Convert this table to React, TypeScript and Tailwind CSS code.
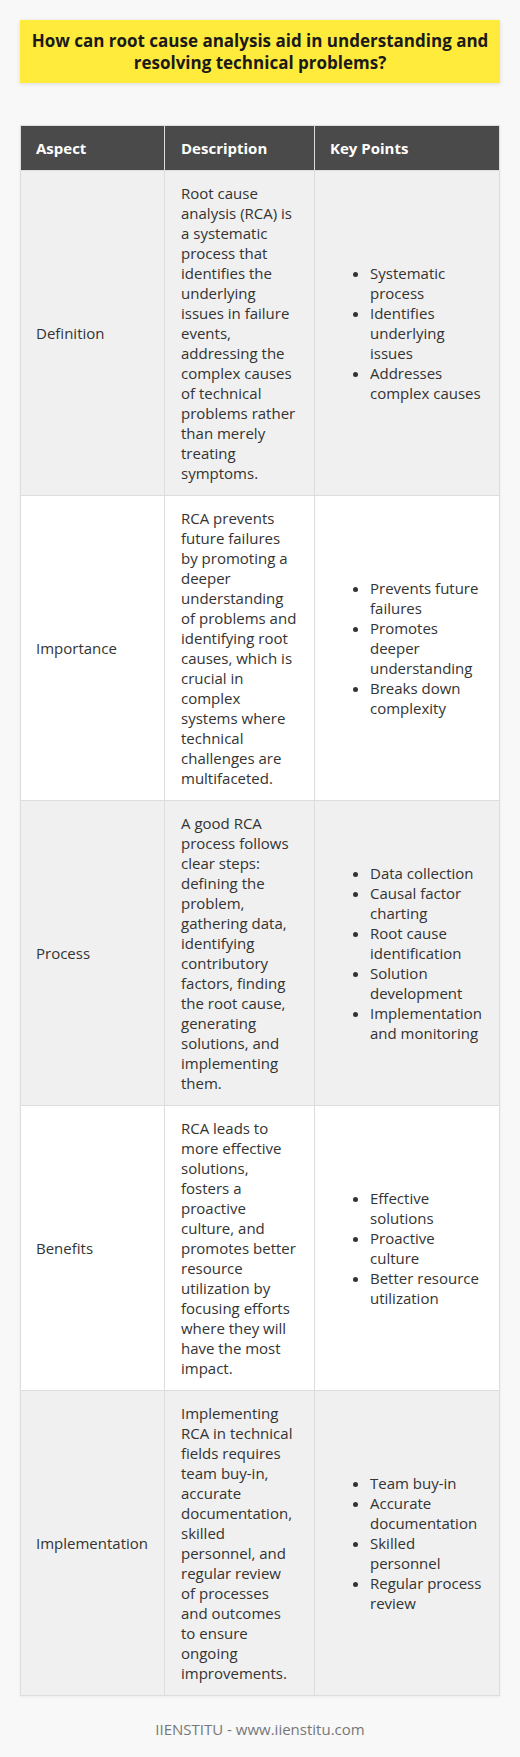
const rows = [
  {
    aspect: "Definition",
    description:
      "Root cause analysis (RCA) is a systematic process that identifies the underlying issues in failure events, addressing the complex causes of technical problems rather than merely treating symptoms.",
    points: ["Systematic process", "Identifies underlying issues", "Addresses complex causes"],
  },
  {
    aspect: "Importance",
    description:
      "RCA prevents future failures by promoting a deeper understanding of problems and identifying root causes, which is crucial in complex systems where technical challenges are multifaceted.",
    points: ["Prevents future failures", "Promotes deeper understanding", "Breaks down complexity"],
  },
  {
    aspect: "Process",
    description:
      "A good RCA process follows clear steps: defining the problem, gathering data, identifying contributory factors, finding the root cause, generating solutions, and implementing them.",
    points: [
      "Data collection",
      "Causal factor charting",
      "Root cause identification",
      "Solution development",
      "Implementation and monitoring",
    ],
  },
  {
    aspect: "Benefits",
    description:
      "RCA leads to more effective solutions, fosters a proactive culture, and promotes better resource utilization by focusing efforts where they will have the most impact.",
    points: ["Effective solutions", "Proactive culture", "Better resource utilization"],
  },
  {
    aspect: "Implementation",
    description:
      "Implementing RCA in technical fields requires team buy-in, accurate documentation, skilled personnel, and regular review of processes and outcomes to ensure ongoing improvements.",
    points: ["Team buy-in", "Accurate documentation", "Skilled personnel", "Regular process review"],
  },
];

export default function App() {
  return (
    <div
      className="min-h-screen bg-[#f8f8f8] p-5 text-[#333]"
      style={{ fontFamily: '"Open Sans", "Liberation Sans", sans-serif' }}
    >
      <div className="bg-[#ffeb3b] px-[10px] py-[10px] text-center shadow-[0_1px_4px_rgba(0,0,0,0.12)]">
        <h1 className="text-[17px] font-bold leading-[21.6px] text-[#1a1a1a]">
          How can root cause analysis aid in understanding and resolving technical problems?
        </h1>
      </div>

      <table className="mt-[42px] w-full table-fixed border-collapse border border-[#ddd] text-[15px] leading-[20px] shadow-[0_1px_3px_rgba(0,0,0,0.06)]">
        <colgroup>
          <col className="w-[144px]" />
          <col className="w-[150px]" />
          <col />
        </colgroup>
        <thead>
          <tr className="bg-[#4a4a4a] text-left text-white">
            <th className="border border-[#ddd] px-[15px] py-[12px] font-bold">Aspect</th>
            <th className="border border-[#ddd] px-[16px] py-[12px] font-bold">Description</th>
            <th className="border border-[#ddd] px-[15px] py-[12px] font-bold">Key Points</th>
          </tr>
        </thead>
        <tbody>
          {rows.map((r, i) => (
            <tr key={r.aspect} className={i % 2 === 0 ? "bg-[#f0f0f0]" : "bg-white"}>
              <td className="border border-[#ddd] px-[15px] py-[12px] align-middle">{r.aspect}</td>
              <td className="border border-[#ddd] px-[16px] py-[12px] align-middle">{r.description}</td>
              <td className="border border-[#ddd] px-[15px] py-[12px] align-middle">
                <ul className="list-disc pl-10">
                  {r.points.map((p) => (
                    <li key={p}>{p}</li>
                  ))}
                </ul>
              </td>
            </tr>
          ))}
        </tbody>
      </table>

      <p className="mt-[23px] text-center text-[15px] leading-[20px] text-[#777]">
        IIENSTITU - www.iienstitu.com
      </p>
    </div>
  );
}
